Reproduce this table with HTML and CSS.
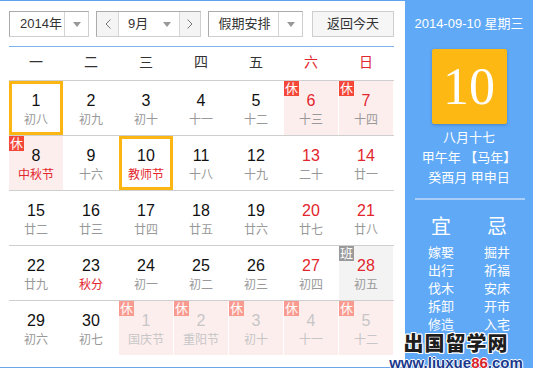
FILE: index.html
```html
<!DOCTYPE html>
<html lang="zh">
<head>
<meta charset="utf-8">
<title>万年历</title>
<link rel="stylesheet" href="styles.css">
</head>
<body>
<div class="page">
  <div class="main">
    <div class="toolbar">
      <div class="sel year"><span class="sel-text">2014年</span><span class="sel-arrow"><i class="tri"></i></span></div>
      <div class="sel month">
        <span class="nav"><svg width="6" height="10" viewBox="0 0 6 10"><polyline points="5.5,0.5 1,5 5.5,9.5" fill="none" stroke="#777" stroke-width="1"/></svg></span>
        <span class="month-mid"><span class="month-text">9月</span><i class="tri"></i></span>
        <span class="nav next"><svg width="6" height="10" viewBox="0 0 6 10"><polyline points="0.5,0.5 5,5 0.5,9.5" fill="none" stroke="#777" stroke-width="1"/></svg></span>
      </div>
      <div class="sel holiday"><span class="sel-text">假期安排</span><span class="sel-arrow"><i class="tri"></i></span></div>
      <div class="btn">返回今天</div>
    </div>
    <div class="week">
      <span>一</span><span>二</span><span>三</span><span>四</span><span>五</span><span class="red">六</span><span class="red">日</span>
    </div>
    <div class="row">
      <div class="cell sel-day"><div class="num">1</div><div class="lunar">初八</div></div>
      <div class="cell"><div class="num">2</div><div class="lunar">初九</div></div>
      <div class="cell"><div class="num">3</div><div class="lunar">初十</div></div>
      <div class="cell"><div class="num">4</div><div class="lunar">十一</div></div>
      <div class="cell"><div class="num">5</div><div class="lunar">十二</div></div>
      <div class="cell rest"><span class="badge">休</span><div class="num red">6</div><div class="lunar">十三</div></div>
      <div class="cell rest"><span class="badge">休</span><div class="num red">7</div><div class="lunar">十四</div></div>
    </div>
    <div class="row">
      <div class="cell rest"><span class="badge">休</span><div class="num">8</div><div class="lunar red">中秋节</div></div>
      <div class="cell"><div class="num">9</div><div class="lunar">十六</div></div>
      <div class="cell sel-day"><div class="num">10</div><div class="lunar red">教师节</div></div>
      <div class="cell"><div class="num">11</div><div class="lunar">十八</div></div>
      <div class="cell"><div class="num">12</div><div class="lunar">十九</div></div>
      <div class="cell"><div class="num red">13</div><div class="lunar">二十</div></div>
      <div class="cell"><div class="num red">14</div><div class="lunar">廿一</div></div>
    </div>
    <div class="row">
      <div class="cell"><div class="num">15</div><div class="lunar">廿二</div></div>
      <div class="cell"><div class="num">16</div><div class="lunar">廿三</div></div>
      <div class="cell"><div class="num">17</div><div class="lunar">廿四</div></div>
      <div class="cell"><div class="num">18</div><div class="lunar">廿五</div></div>
      <div class="cell"><div class="num">19</div><div class="lunar">廿六</div></div>
      <div class="cell"><div class="num red">20</div><div class="lunar">廿七</div></div>
      <div class="cell"><div class="num red">21</div><div class="lunar">廿八</div></div>
    </div>
    <div class="row">
      <div class="cell"><div class="num">22</div><div class="lunar">廿九</div></div>
      <div class="cell"><div class="num">23</div><div class="lunar red">秋分</div></div>
      <div class="cell"><div class="num">24</div><div class="lunar">初一</div></div>
      <div class="cell"><div class="num">25</div><div class="lunar">初二</div></div>
      <div class="cell"><div class="num">26</div><div class="lunar">初三</div></div>
      <div class="cell"><div class="num red">27</div><div class="lunar">初四</div></div>
      <div class="cell work"><span class="badge gray">班</span><div class="num red">28</div><div class="lunar">初五</div></div>
    </div>
    <div class="row">
      <div class="cell"><div class="num">29</div><div class="lunar">初六</div></div>
      <div class="cell"><div class="num">30</div><div class="lunar">初七</div></div>
      <div class="cell rest faded"><span class="badge">休</span><div class="num">1</div><div class="lunar">国庆节</div></div>
      <div class="cell rest faded"><span class="badge">休</span><div class="num">2</div><div class="lunar">重阳节</div></div>
      <div class="cell rest faded"><span class="badge">休</span><div class="num">3</div><div class="lunar">初十</div></div>
      <div class="cell rest faded"><span class="badge">休</span><div class="num">4</div><div class="lunar">十一</div></div>
      <div class="cell rest faded"><span class="badge">休</span><div class="num">5</div><div class="lunar">十二</div></div>
    </div>
  </div>
  <aside class="side">
    <div class="side-date">2014-09-10 星期三</div>
    <div class="big-day">10</div>
    <div class="side-info">
      <div>八月十七</div>
      <div>甲午年 【马年】</div>
      <div>癸酉月 甲申日</div>
    </div>
    <div class="side-line"></div>
    <div class="yiji">
      <div class="col">
        <div class="yj-title">宜</div>
        <div>嫁娶</div><div>出行</div><div>伐木</div><div>拆卸</div><div>修造</div>
      </div>
      <div class="col">
        <div class="yj-title">忌</div>
        <div>掘井</div><div>祈福</div><div>安床</div><div>开市</div><div>入宅</div>
      </div>
    </div>
  </aside>
  <div class="watermark">
    <div class="wm-cn">出国留学网</div>
    <div class="wm-url">www.liuxue<span class="wm-red">86</span>.com</div>
  </div>
</div>
</body>
</html>
```
FILE: styles.css
```css
* { box-sizing: border-box; }
html, body {
  margin: 0;
  padding: 0;
  width: 533px;
  height: 368px;
  overflow: hidden;
  background: #fff;
}
body {
  font-family: "Liberation Sans", "Noto Sans CJK SC", sans-serif;
  color: #000;
}
.page {
  position: relative;
  display: flex;
  width: 533px;
  height: 368px;
}
.main {
  width: 405px;
  height: 368px;
  border-top: 1px solid #5ea3ef;
  border-bottom: 1px solid #6aa6e8;
  padding: 10px 11px 0 9px;
}
.toolbar {
  display: flex;
  height: 36px;
  align-items: flex-start;
  border-bottom: 1px solid #7db3ec;
  width: 385px;
}
.sel {
  display: flex;
  height: 26px;
  border: 1px solid #ababab;
  border-right-color: #cfcfcf;
  border-bottom-color: #cfcfcf;
  font-size: 13px;
  color: #333;
  line-height: 24px;
  background: #fff;
}
.year { width: 80px; }
.year .sel-text { width: 54px; padding-left: 10px; }
.sel-arrow {
  flex: 1;
  border-left: 1px solid #d5d5d5;
  display: flex;
  align-items: center;
  justify-content: center;
}
.tri {
  display: block;
  width: 0;
  height: 0;
  border-top: 5px solid #999;
  border-left: 4px solid transparent;
  border-right: 4px solid transparent;
}
.month { width: 105px; margin-left: 7px; }
.nav {
  width: 22px;
  background: #f4f4f4;
  display: flex;
  align-items: center;
  justify-content: center;
  border-right: 1px solid #d5d5d5;
}
.nav.next { border-right: 0; border-left: 1px solid #d5d5d5; flex: 1; }
.month-mid {
  width: 60px;
  display: flex;
  align-items: center;
  padding-left: 9px;
}
.month-text { width: 35px; }
.holiday { width: 95px; margin-left: 7px; }
.holiday .sel-text { width: 69px; text-align: center; padding-left: 2px; }
.btn {
  width: 82px;
  height: 26px;
  margin-left: 9px;
  border: 1px solid #cfcfcf;
  background: #f6f6f6;
  font-size: 13px;
  line-height: 24px;
  text-align: center;
  color: #333;
}
.week {
  display: flex;
  width: 385px;
  height: 33px;
  gap: 1px;
}
.week span {
  width: 54px;
  text-align: center;
  font-size: 14px;
  line-height: 30px;
  color: #333;
}
.red { color: #e2262d !important; }
.row {
  display: flex;
  gap: 1px;
  width: 385px;
  border-top: 1px solid #cfcfcf;
}
.cell {
  position: relative;
  width: 54px;
  height: 54px;
  padding-top: 9px;
  text-align: center;
}
.num {
  font-size: 16px;
  line-height: 22px;
  color: #111;
}
.lunar {
  font-size: 12px;
  line-height: 16px;
  color: #999;
}
.rest { background: #fdeeee; }
.work { background: #f3f3f3; }
.sel-day { box-shadow: inset 0 0 0 3px #fcb614; }
.badge {
  position: absolute;
  top: 0;
  left: 0;
  width: 15px;
  height: 15px;
  background: #f4473a;
  color: #fff;
  font-size: 13px;
  line-height: 15px;
  text-align: center;
}
.badge.gray { background: #9a9a9a; }
.faded .badge { background: #f99a90; }
.faded .num, .faded .lunar { color: #c6c6c6; }
.side {
  width: 128px;
  height: 368px;
  background: #60a9f6;
  color: #fff;
  padding-top: 14px;
  text-align: center;
}
.side-date {
  font-size: 13px;
  line-height: 20px;
}
.big-day {
  width: 75px;
  height: 75px;
  margin: 15px auto 0;
  background: #fdb813;
  border-radius: 2px;
  box-shadow: 0 1px 3px rgba(40, 80, 140, 0.45);
  font-family: "Liberation Serif", serif;
  font-size: 52px;
  line-height: 75px;
}
.side-info {
  margin-top: 4px;
  font-size: 13px;
  line-height: 20px;
}
.side-line {
  height: 2px;
  background: #a9cff9;
  margin: 10px 8px 0 10px;
}
.yiji {
  display: flex;
  justify-content: center;
  margin-top: 13px;
  font-size: 13px;
  line-height: 18px;
}
.col { width: 56px; }
.yj-title {
  font-size: 20px;
  line-height: 28px;
  margin-bottom: 3px;
}
.watermark {
  position: absolute;
  left: 386px;
  top: 332px;
  width: 140px;
  text-align: center;
}
.wm-cn {
  font-family: "Noto Sans CJK SC", sans-serif;
  font-weight: 900;
  font-size: 20px;
  line-height: 22px;
  letter-spacing: 1px;
  color: #1e1e1e;
  text-shadow: 1px 0 0 #fff, -1px 0 0 #fff, 0 1px 0 #fff, 0 -1px 0 #fff, 1px 1px 0 #fff, -1px -1px 0 #fff, 1px -1px 0 #fff, -1px 1px 0 #fff;
}
.wm-url {
  font-family: "Liberation Sans", sans-serif;
  font-weight: bold;
  font-size: 15px;
  line-height: 18px;
  color: #1b3a8c;
  text-shadow: 1px 0 0 #fff, -1px 0 0 #fff, 0 1px 0 #fff, 0 -1px 0 #fff;
}
.wm-red { color: #d9232b; }
```
